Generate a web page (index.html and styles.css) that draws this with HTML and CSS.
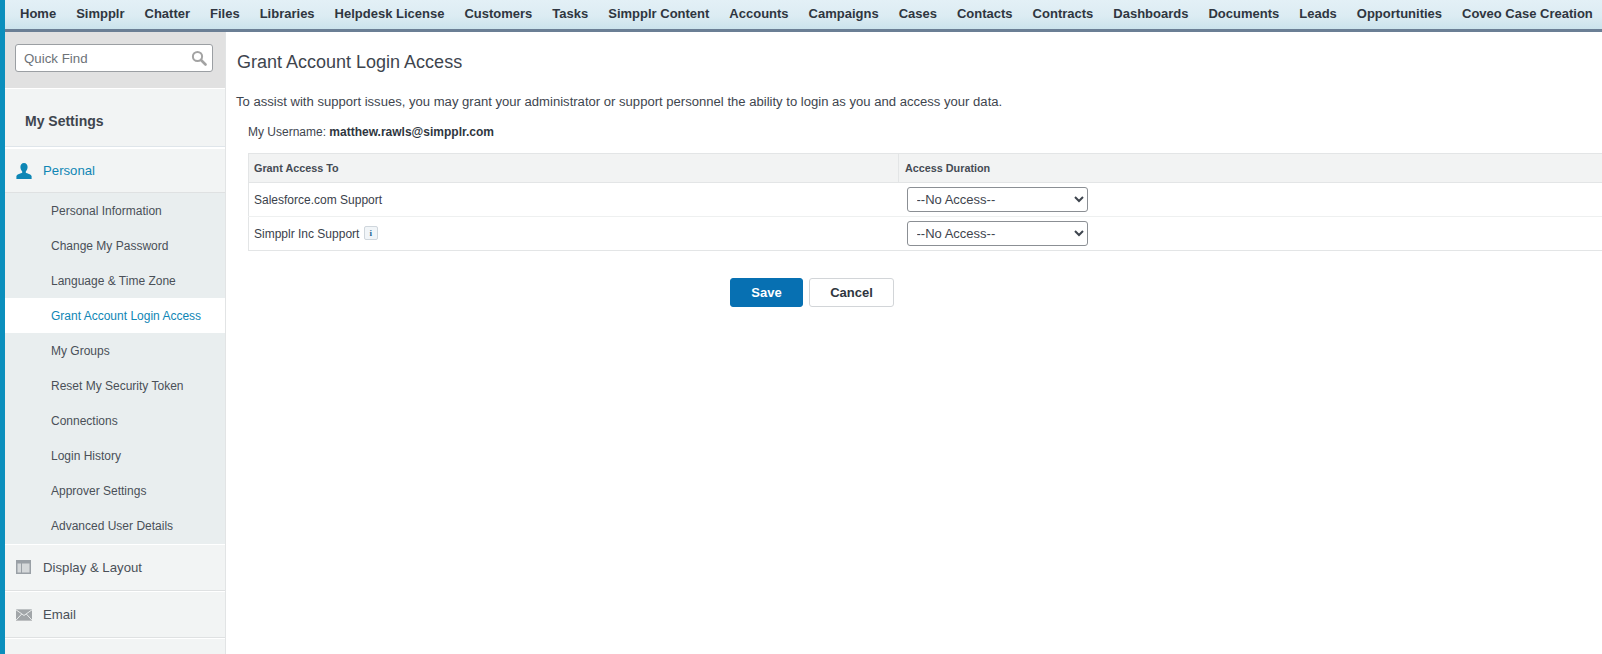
FILE: index.html
```html
<!DOCTYPE html>
<html lang="en">
<head>
<meta charset="utf-8">
<title>Grant Account Login Access</title>
<link rel="stylesheet" href="styles.css">
</head>
<body>
<nav class="tabs">
  <a>Home</a><a>Simpplr</a><a>Chatter</a><a>Files</a><a>Libraries</a><a>Helpdesk License</a><a>Customers</a><a>Tasks</a><a>Simpplr Content</a><a>Accounts</a><a>Campaigns</a><a>Cases</a><a>Contacts</a><a>Contracts</a><a>Dashboards</a><a>Documents</a><a>Leads</a><a>Opportunities</a><a>Coveo Case Creation</a>
</nav>
<div class="page">
  <aside class="side">
    <div class="find">
      <div class="find-box">
        <span>Quick Find</span>
        <svg width="16" height="16" viewBox="0 0 16 16"><circle cx="6.500" cy="6.500" r="4.600" fill="none" stroke="#a3a3a3" stroke-width="2"/><path d="M10 10l4.500 4.500" stroke="#a3a3a3" stroke-width="2.600" stroke-linecap="round"/></svg>
      </div>
    </div>
    <div class="side-title">My Settings</div>
    <div class="group group-open">
      <svg class="group-icon" width="16" height="16" viewBox="0 0 16 16"><path d="M8 0c2.300 0 3.600 1.700 3.600 4 0 1.900-.8 3.500-1.800 4.400v1.300c1 .6 5.200 1.500 5.800 3.300v3H.4v-3c.6-1.800 4.800-2.700 5.800-3.300V8.400C5.200 7.500 4.400 5.900 4.400 4 4.400 1.700 5.700 0 8 0z" fill="#0d86b5"/></svg>
      <span>Personal</span>
    </div>
    <ul class="items">
      <li>Personal Information</li>
      <li>Change My Password</li>
      <li>Language &amp; Time Zone</li>
      <li class="active">Grant Account Login Access</li>
      <li>My Groups</li>
      <li>Reset My Security Token</li>
      <li>Connections</li>
      <li>Login History</li>
      <li>Approver Settings</li>
      <li>Advanced User Details</li>
    </ul>
    <div class="group">
      <svg class="group-icon" width="16" height="15" viewBox="0 0 16 15"><path d="M0 0h15v14H0z" fill="#9aa0a6"/><path d="M1.500 3.500h3.500v9H1.500zM6 3.500h7.500v9H6z" fill="#d5d8da"/></svg>
      <span>Display &amp; Layout</span>
    </div>
    <div class="group">
      <svg class="group-icon" width="17" height="12" viewBox="0 0 17 12"><path d="M0 0h17v12H0z" fill="#a1a5a8"/><path d="M0 .5l8.500 6 8.500-6M0 11.500l6-6.500M17 11.500l-6-6.500" fill="none" stroke="#eef0f0" stroke-width="1"/></svg>
      <span>Email</span>
    </div>
    <div class="group group-last"></div>
  </aside>
  <main class="main">
    <h1>Grant Account Login Access</h1>
    <p class="intro">To assist with support issues, you may grant your administrator or support personnel the ability to login as you and access your data.</p>
    <p class="user">My Username: <b>matthew.rawls@simpplr.com</b></p>
    <table class="grid">
      <thead>
        <tr><th class="col-a">Grant Access To</th><th>Access Duration</th></tr>
      </thead>
      <tbody>
        <tr>
          <td>Salesforce.com Support</td>
          <td class="sel"><select><option>--No Access--</option></select></td>
        </tr>
        <tr>
          <td>Simpplr Inc Support <span class="info">i</span></td>
          <td class="sel"><select><option>--No Access--</option></select></td>
        </tr>
      </tbody>
    </table>
    <div class="actions">
      <button class="btn btn-save">Save</button>
      <button class="btn">Cancel</button>
    </div>
  </main>
</div>
</body>
</html>
```
FILE: styles.css
```css
* { box-sizing: border-box; }
html, body { margin: 0; height: 100%; overflow: hidden; }
body {
  width: 1602px;
  height: 654px;
  display: flex;
  flex-direction: column;
  background: #fff;
  font-family: "Liberation Sans", Arial, sans-serif;
  color: #3a414b;
  border-left: 5px solid #0b8fbd;
}
.tabs {
  height: 32px;
  flex: none;
  display: flex;
  gap: 20px;
  padding: 0 0 3px 15px;
  align-items: center;
  background: linear-gradient(#e3f0f6, #dcecf3 55%, #cbe3ec);
  border-bottom: 3px solid #6b7f95;
  font-size: 13px;
  font-weight: bold;
  color: #2f3640;
  white-space: nowrap;
}
.page { flex: 1; display: flex; min-height: 0; }
.side {
  width: 221px;
  flex: none;
  background: #f2f4f4;
  border-right: 1px solid #e2e4e5;
}
.find {
  height: 56px;
  background: #e1e1e1;
  padding: 12px 10px 0;
}
.find-box {
  height: 28px;
  width: 198px;
  background: #fff;
  border: 1px solid #9b9fa3;
  border-radius: 3px;
  padding: 0 5px 0 8px;
  display: flex;
  align-items: center;
  justify-content: space-between;
  font-size: 13.300px;
  color: #6d7278;
}
.side-title {
  height: 59px;
  padding: 6px 0 0 20px;
  display: flex;
  align-items: center;
  font-size: 14px;
  font-weight: bold;
  color: #3e454e;
  border-top: 1px solid #fff;
  border-bottom: 1px solid #dfe5ea;
}
.group {
  height: 47px;
  display: flex;
  align-items: center;
  gap: 11px;
  padding-left: 11px;
  font-size: 13.200px;
  color: #4a5058;
  border-top: 1px solid #fff;
  border-bottom: 1px solid #dfe1e2;
}
.group-icon { width: 16px; flex: none; }
.group-open { height: 46px; color: #0f86b5; border-top: 2px solid #fff; }
.group-last { height: 20px; }
.items { list-style: none; margin: 0; padding: 0 0 1px; background: #e9eeef; }
.items li {
  height: 35px;
  display: flex;
  align-items: center;
  padding-left: 46px;
  font-size: 12px;
  color: #4a5058;
}
.items li.active { background: #fff; color: #0f86b5; }
.main { flex: 1; min-width: 0; padding: 0 0 0 10px; }
h1 {
  margin: 20px 0 0;
  padding-left: 1px;
  height: 21px;
  line-height: 21px;
  font-size: 18px;
  font-weight: normal;
  color: #3e454e;
}
.intro { margin: 19px 0 0; height: 20px; line-height: 20px; font-size: 13.090px; color: #3e454e; }
.user { margin: 10px 0 0 12px; height: 20px; line-height: 20px; font-size: 12px; color: #3e454e; }
.user b { color: #2f3640; }
.grid {
  margin: 11px 0 0 12px;
  width: 1354px;
  border-collapse: collapse;
  table-layout: fixed;
  border: 1px solid #e3e5e6;
  border-right: 0;
  font-size: 12px;
}
.grid th {
  height: 29px;
  padding: 0 5px;
  background: #f2f3f3;
  text-align: left;
  font-size: 10.800px;
  color: #454b54;
  border-bottom: 1px solid #e3e5e6;
  border-left: 1px solid #e3e5e6;
}
.grid th.col-a { width: 650px; border-left: 0; }
.grid th:last-child { padding-left: 6px; }
.grid td {
  height: 34px;
  padding: 0 5px;
  border-bottom: 1px solid #eef0f0;
}
.grid tr:last-child td { border-bottom: 1px solid #e3e5e6; }
.grid td.sel { padding-left: 8px; }
select {
  display: block;
  width: 181px;
  height: 25px;
  padding: 0 4px 0 5px;
  background: #fff;
  border: 1px solid #8b8f94;
  border-radius: 3px;
  font: 13px "Liberation Sans", Arial, sans-serif;
  color: #3e454e;
}
.info {
  display: inline-block;
  width: 14px;
  height: 14px;
  margin-left: 1px;
  border: 1px solid #cfd6dc;
  border-radius: 2px;
  background: #f1f5f8;
  vertical-align: 2px;
  text-align: center;
  font: bold 9px/12px "Liberation Serif", serif;
  color: #1f6797;
}
.actions {
  display: flex;
  gap: 6px;
  margin: 27px 0 0;
  padding-left: 494px;
}
.btn {
  height: 29px;
  width: 85px;
  background: #fff;
  border: 1px solid #d2d5d8;
  border-radius: 3px;
  font: bold 13px "Liberation Sans", Arial, sans-serif;
  color: #2f3640;
}
.btn-save { width: 73px; background: #0770b2; border-color: #0770b2; color: #fff; }
```
